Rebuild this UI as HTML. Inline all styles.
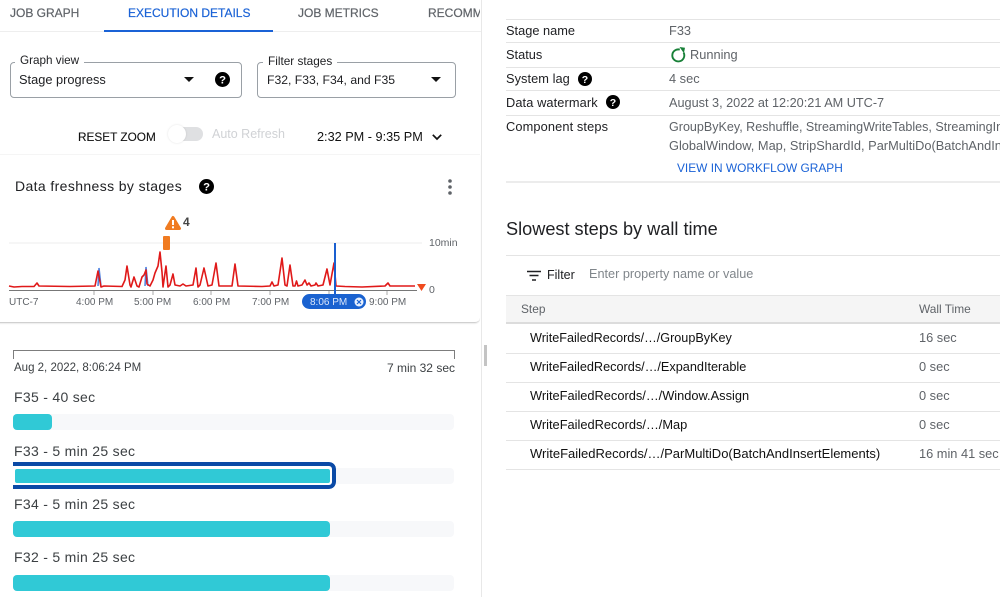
<!DOCTYPE html>
<html><head><meta charset="utf-8">
<style>
html,body{margin:0;padding:0;background:#fff;width:1000px;height:597px;overflow:hidden}
body{font-family:"Liberation Sans",Arial,sans-serif;position:relative;filter:blur(.35px)}
.t{position:absolute;white-space:nowrap;line-height:16px;font-size:12.8px;color:#202124}
.g{color:#5f6368}
.tab{font-size:12px;-webkit-text-stroke:.2px currentColor}
.ax{font-size:10px;top:295px;color:#5f6368}
.s{font-size:14px;letter-spacing:.3px;color:#3c4043}
.r{font-size:13px;color:#111}
.l{position:absolute;background:#e4e4e4;height:1px}
.box{position:absolute;border:1px solid #9aa0a6;border-radius:4px;box-sizing:border-box;height:36px;top:62px}
.track{position:absolute;left:13px;width:441px;height:16px;background:#f7f8fa;border-radius:4px}
.bar{position:absolute;left:13px;height:16px;background:#30c9d6;border-radius:4px}
svg{position:absolute;overflow:visible}
.q{width:15px;height:15px}
</style></head><body>

<!-- tabs -->
<div class="t g tab" style="left:10px;top:5px">JOB GRAPH</div>
<div class="t tab" style="left:128px;top:5px;color:#1a62d6">EXECUTION DETAILS</div>
<div class="t g tab" style="left:298px;top:5px">JOB METRICS</div>
<div class="t g tab" style="left:428px;top:5px;width:52px;overflow:hidden">RECOMMENDATIONS</div>
<div class="l" style="left:0;top:31px;width:481px;height:1px;background:#eee"></div>
<div style="position:absolute;left:104px;top:30px;width:169px;height:2px;background:#1a62d6"></div>

<!-- selects -->
<div class="box" style="left:10px;width:232px"></div>
<div class="t" style="left:15px;top:53px;background:#fff;padding:0 5px;font-size:11.7px">Graph view</div>
<div class="t" style="left:19px;top:72px;font-size:12.8px">Stage progress</div>
<svg style="left:184px;top:77px" width="11" height="6"><path d="M0 0H10L5 5Z" fill="#111"/></svg>
<svg class="q" style="left:215px;top:72px" viewBox="0 0 24 24"><circle cx="12" cy="12" r="12" fill="#000"/><text x="12" y="18.500" text-anchor="middle" font-size="18" font-weight="700" fill="#fff" font-family="Liberation Sans">?</text></svg>

<div class="box" style="left:257px;width:199px"></div>
<div class="t" style="left:263px;top:53px;background:#fff;padding:0 5px;font-size:11.8px">Filter stages</div>
<div class="t" style="left:267px;top:72px;font-size:12.2px">F32, F33, F34, and F35</div>
<svg style="left:431px;top:77px" width="11" height="6"><path d="M0 0H10L5 5Z" fill="#111"/></svg>

<!-- controls -->
<div class="t" style="left:78px;top:129px;font-size:11.8px;color:#111;-webkit-text-stroke:.1px #111">RESET ZOOM</div>
<div style="position:absolute;left:174px;top:127px;width:29px;height:14px;border-radius:7px;background:#dfe0e2"></div>
<div style="position:absolute;left:168px;top:125px;width:18px;height:18px;border-radius:50%;background:#fff;box-shadow:0 0 2px rgba(0,0,0,.12)"></div>
<div class="t" style="left:212px;top:126px;color:#d0d2d5;font-size:12.5px">Auto Refresh</div>
<div class="t" style="left:317px;top:129px;font-size:12.7px;color:#111">2:32 PM - 9:35 PM</div>
<svg style="left:432px;top:134px" width="10" height="7"><path d="M.8 .8L5 5L9.200 .8" fill="none" stroke="#111" stroke-width="1.700"/></svg>

<!-- chart card -->
<div style="position:absolute;left:-4px;top:154px;width:484px;height:167px;border-top:1px solid #f5f5f5;border-bottom:1px solid #d0d0d0;border-radius:0 0 5px 0;box-shadow:0 1px 1px rgba(0,0,0,.08)"></div>
<div class="t" style="left:15px;top:177px;font-size:14px;letter-spacing:.38px;line-height:18px">Data freshness by stages</div>
<svg class="q" style="left:199px;top:178.500px" viewBox="0 0 24 24"><circle cx="12" cy="12" r="12" fill="#000"/><text x="12" y="18.500" text-anchor="middle" font-size="18" font-weight="700" fill="#fff" font-family="Liberation Sans">?</text></svg>
<svg style="left:447px;top:178px" width="6" height="18"><circle cx="3" cy="3" r="1.800" fill="#5f6368"/><circle cx="3" cy="9" r="1.800" fill="#5f6368"/><circle cx="3" cy="15" r="1.800" fill="#5f6368"/></svg>

<svg style="left:0;top:205px" width="481" height="115" viewBox="0 205 481 115">
 <path d="M9 243H422" stroke="#eee" stroke-width="1"/>
 <path d="M9 290.500H417" stroke="#777" stroke-width="1"/>
 <path d="M94 291v4M153 291v4M211 291v4M270 291v4M329 291v4M387 291v4" stroke="#aaa" stroke-width="1"/>
 <path d="M98 286L99 268L101 286M145 286L146 267L148 286" stroke="#4a7fe0" stroke-width="1.500" fill="none"/>
 <path d="M9 286L14 287L22 286.500L34 286.500L37 283L39 286L70 286.500L95 286L98 271L101 287L104 286L122 286.500L125 280L127 266L130 285L131 287L134 277L137 286L139 287L142 277L144 275L146 270L147 284L150 286L153 280L155 273L158 266L160 252L162 272L163 287L166 266L168 287L170 285L173 274L175 285L180 286L183 284L186 286L193 285L196 268L198 287L200 285L204 268L208 286L212 285L216 263L219 286L232 286L235 264L238 286L262 286.500L270 286L272 282L274 286L278 285L282 258L285 285L287 286L290 265L293 286L295 286L296.500 281L298 286L302 285L305 280L307 285L309 283L311 286L315 285L316 283L318 286L323 285L327 269L330 285L334 263L336 286L345 286.500L362 287L385 286L388 283L390 286L415 286" fill="none" stroke="#e01919" stroke-width="1.600" stroke-linejoin="round"/>
 <path d="M335 243V295" stroke="#1a5fd0" stroke-width="2"/>
 <path d="M417 284H426L421.500 291Z" fill="#f04a1e"/>
 <path d="M173 217.500L179.500 228.500H166.500Z" fill="#f07b21" stroke="#f07b21" stroke-width="3" stroke-linejoin="round"/>
 <rect x="172" y="220" width="2" height="5" fill="#fff"/><rect x="172" y="226.300" width="2" height="2" fill="#fff"/>
 <rect x="163" y="236" width="7" height="14" rx="1" fill="#f07b21"/>
</svg>
<div class="t" style="left:183px;top:214px;font-size:12px;font-weight:700;color:#444">4</div>
<div class="t g" style="left:429px;top:235px;font-size:10.500px">10min</div>
<div class="t g" style="left:429px;top:282px;font-size:10.500px">0</div>
<div class="t ax" style="left:9px">UTC-7</div>
<div class="t ax" style="left:76px">4:00 PM</div>
<div class="t ax" style="left:134px">5:00 PM</div>
<div class="t ax" style="left:193px">6:00 PM</div>
<div class="t ax" style="left:252px">7:00 PM</div>
<div class="t ax" style="left:369px">9:00 PM</div>
<div style="position:absolute;left:302px;top:294px;width:64px;height:15px;border-radius:8px;background:#1a62d0"></div>
<div class="t" style="left:310px;top:295px;font-size:10px;line-height:15px;color:#dbe7fb">8:06 PM</div>
<svg style="left:354px;top:297px" width="10" height="10"><circle cx="5" cy="5" r="4.500" fill="#e8f0fd"/><path d="M3 3L7 7M7 3L3 7" stroke="#1a62d0" stroke-width="1.200"/></svg>

<!-- timeline -->
<svg style="left:13px;top:350px" width="443" height="10"><path d="M.5 9V.5H441.500V9" fill="none" stroke="#7d7d7d" stroke-width="1"/></svg>
<div class="t" style="left:14px;top:360px;font-size:11.500px;color:#3c4043">Aug 2, 2022, 8:06:24 PM</div>
<div class="t" style="right:545px;top:360px;font-size:12px;color:#3c4043">7 min 32 sec</div>

<div class="t s" style="left:14px;top:389px">F35 - 40 sec</div>
<div class="track" style="top:414px"></div><div class="bar" style="top:414px;width:39px"></div>

<div class="t s" style="left:14px;top:443px">F33 - 5 min 25 sec</div>
<div class="track" style="top:468px"></div>
<div style="position:absolute;left:13px;top:462px;width:323px;height:27px;overflow:hidden;background:#fff;border-radius:0 7px 7px 0">
 <div style="position:absolute;left:-20px;top:0;width:343px;height:27px;box-sizing:border-box;border:4px solid #0b4aa6;border-radius:7px"></div>
</div>
<div class="bar" style="top:469px;left:15px;width:315px;height:14px;border-radius:2px"></div>

<div class="t s" style="left:14px;top:496px">F34 - 5 min 25 sec</div>
<div class="track" style="top:521px"></div><div class="bar" style="top:521px;width:317px"></div>

<div class="t s" style="left:14px;top:549px">F32 - 5 min 25 sec</div>
<div class="track" style="top:575px"></div><div class="bar" style="top:575px;width:317px"></div>

<!-- divider -->
<div style="position:absolute;left:481px;top:0;width:1px;height:597px;background:#e8e8e8"></div>
<div style="position:absolute;left:484px;top:345px;width:3px;height:21px;background:#c4c4c4"></div>

<!-- right details -->
<div class="l" style="left:506px;top:19px;width:494px"></div>
<div class="l" style="left:506px;top:42px;width:494px"></div>
<div class="l" style="left:506px;top:67px;width:494px"></div>
<div class="l" style="left:506px;top:90px;width:494px"></div>
<div class="l" style="left:506px;top:115px;width:494px"></div>
<div class="l" style="left:506px;top:181px;width:494px;height:2px;background:#ececec"></div>

<div class="t" style="left:506px;top:23px;font-size:12.8px">Stage name</div>
<div class="t g" style="left:669px;top:23px">F33</div>
<div class="t" style="left:506px;top:47px">Status</div>
<svg style="left:671px;top:47px" width="16" height="16" viewBox="0 0 16 16"><path d="M12.600 5.600A6 6 0 1 1 8.800 2.600" fill="none" stroke="#188038" stroke-width="1.900"/><path d="M8.500 0L14 .8L12.900 6.200Z" fill="#188038"/></svg>
<div class="t g" style="left:690px;top:47px">Running</div>
<div class="t" style="left:506px;top:71px;letter-spacing:.05px">System lag</div>
<svg class="q" style="left:578px;top:72px;width:14px;height:14px" viewBox="0 0 24 24"><circle cx="12" cy="12" r="12" fill="#000"/><text x="12" y="18.500" text-anchor="middle" font-size="18" font-weight="700" fill="#fff" font-family="Liberation Sans">?</text></svg>
<div class="t g" style="left:669px;top:71px">4 sec</div>
<div class="t" style="left:506px;top:95px;letter-spacing:.1px">Data watermark</div>
<svg class="q" style="left:606px;top:95px;width:14px;height:14px" viewBox="0 0 24 24"><circle cx="12" cy="12" r="12" fill="#000"/><text x="12" y="18.500" text-anchor="middle" font-size="18" font-weight="700" fill="#fff" font-family="Liberation Sans">?</text></svg>
<div class="t g" style="left:669px;top:95px;font-size:12.700px">August 3, 2022 at 12:20:21 AM UTC-7</div>
<div class="t" style="left:506px;top:119px;letter-spacing:.12px">Component steps</div>
<div class="t g" style="left:669px;top:119px;width:331px;overflow:hidden;font-size:12.550px">GroupByKey, Reshuffle, StreamingWriteTables, StreamingInserts</div>
<div class="t g" style="left:669px;top:138px;width:331px;overflow:hidden;font-size:12.800px">GlobalWindow, Map, StripShardId, ParMultiDo(BatchAndInsertElements)</div>
<div class="t" style="left:677px;top:160px;color:#1a62d6;font-size:11.900px">VIEW IN WORKFLOW GRAPH</div>

<div class="t" style="left:506px;top:219px;font-size:18.150px;line-height:20px;color:#202124">Slowest steps by wall time</div>
<div class="l" style="left:506px;top:255px;width:494px"></div>

<svg style="left:526px;top:270px" width="16" height="12"><path d="M1 1.500H15M3.500 5.500H12.500M6 10H10" stroke="#202124" stroke-width="1.500"/></svg>
<div class="t" style="left:547px;top:267px;font-size:12.500px">Filter</div>
<div class="t" style="left:589px;top:266px;font-size:12.700px;color:#80868b">Enter property name or value</div>

<div style="position:absolute;left:506px;top:295px;width:494px;height:29px;background:#f5f5f5;border-top:1px solid #e4e4e4;border-bottom:2px solid #dcdcdc;box-sizing:border-box"></div>
<div class="t g" style="left:521px;top:301px;font-size:11.900px">Step</div>
<div class="t g" style="left:919px;top:301px;font-size:11.900px">Wall Time</div>

<div class="t r" style="left:530px;top:330px;font-size:12.630px">WriteFailedRecords/…/GroupByKey</div>
<div class="t g" style="left:919px;top:330px">16 sec</div>
<div class="l" style="left:506px;top:353px;width:494px"></div>
<div class="t r" style="left:530px;top:359px;font-size:12.700px">WriteFailedRecords/…/ExpandIterable</div>
<div class="t g" style="left:919px;top:359px">0 sec</div>
<div class="l" style="left:506px;top:382px;width:494px"></div>
<div class="t r" style="left:530px;top:388px;font-size:12.820px">WriteFailedRecords/…/Window.Assign</div>
<div class="t g" style="left:919px;top:388px">0 sec</div>
<div class="l" style="left:506px;top:411px;width:494px"></div>
<div class="t r" style="left:530px;top:417px;font-size:12.840px">WriteFailedRecords/…/Map</div>
<div class="t g" style="left:919px;top:417px">0 sec</div>
<div class="l" style="left:506px;top:440px;width:494px"></div>
<div class="t r" style="left:530px;top:446px">WriteFailedRecords/…/ParMultiDo(BatchAndInsertElements)</div>
<div class="t g" style="left:919px;top:446px">16 min 41 sec</div>
<div class="l" style="left:506px;top:469px;width:494px"></div>

</body></html>
